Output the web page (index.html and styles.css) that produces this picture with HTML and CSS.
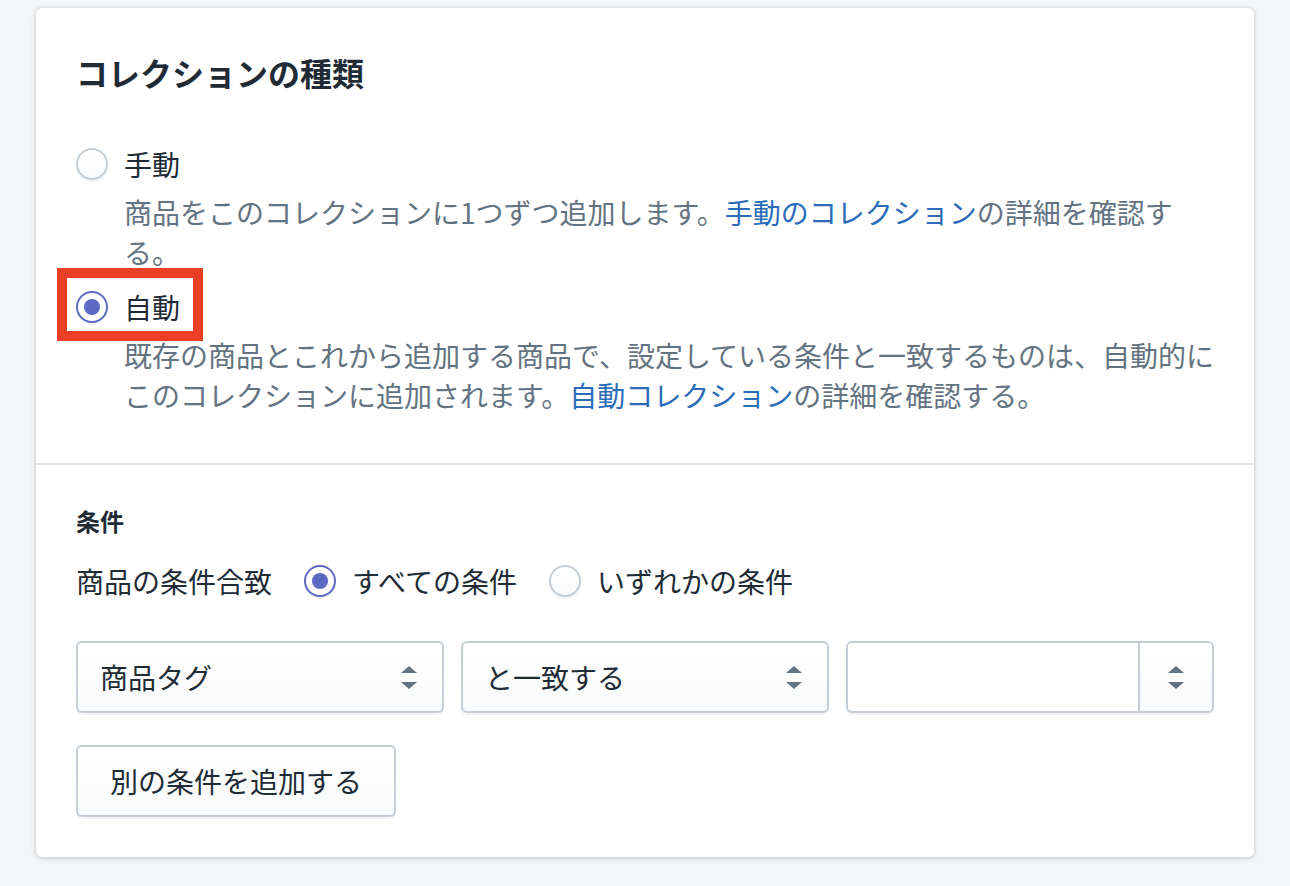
FILE: index.html
```html
<!DOCTYPE html>
<html lang="ja">
<head>
<meta charset="utf-8">
<title>コレクションの種類</title>
<link rel="stylesheet" href="styles.css">
</head>
<body>
<div class="card">
  <div class="card-header">
    <h2 class="card-title">コレクションの種類</h2>
  </div>
  <div class="section section-type">
    <ul class="choice-list">
      <li class="choice-item">
        <label class="choice">
          <span class="radio"></span>
          <span class="choice-label">手動</span>
        </label>
        <div class="help">商品をこのコレクションに1つずつ追加します。<a class="link" href="#">手動のコレクション</a>の詳細を確認する。</div>
      </li>
      <li class="choice-item">
        <label class="choice">
          <span class="radio checked"></span>
          <span class="choice-label">自動</span>
          <span class="highlight"></span>
        </label>
        <div class="help">既存の商品とこれから追加する商品で、設定している条件と一致するものは、自動的にこのコレクションに追加されます。<a class="link" href="#">自動コレクション</a>の詳細を確認する。</div>
      </li>
    </ul>
  </div>
  <div class="section section-conditions">
    <h3 class="subheading">条件</h3>
    <div class="match-row">
      <span class="match-label">商品の条件合致</span>
      <label class="choice inline">
        <span class="radio checked"></span>
        <span class="choice-label">すべての条件</span>
      </label>
      <label class="choice inline">
        <span class="radio"></span>
        <span class="choice-label">いずれかの条件</span>
      </label>
    </div>
    <div class="rule-row">
      <div class="select">
        <span class="select-text">商品タグ</span>
        <svg class="arrows" width="16" height="23" viewBox="0 0 16 23"><polygon points="0,7 8,0 16,7" /><polygon points="0,16 8,23 16,16" /></svg>
      </div>
      <div class="select">
        <span class="select-text">と一致する</span>
        <svg class="arrows" width="16" height="23" viewBox="0 0 16 23"><polygon points="0,7 8,0 16,7" /><polygon points="0,16 8,23 16,16" /></svg>
      </div>
      <div class="combo">
        <div class="combo-input"></div>
        <div class="combo-toggle">
          <svg class="arrows" width="16" height="23" viewBox="0 0 16 23"><polygon points="0,7 8,0 16,7" /><polygon points="0,16 8,23 16,16" /></svg>
        </div>
      </div>
    </div>
    <button class="button" type="button">別の条件を追加する</button>
  </div>
</div>
</body>
</html>
```
FILE: styles.css
```css
* { box-sizing: border-box; }

html, body {
  margin: 0;
  background: #f4f6f8;
}

body {
  padding: 8px 36px 28px;
  font-family: "Noto Sans CJK JP", "Noto Sans", sans-serif;
  color: #212b36;
  font-size: 28px;
  line-height: 40px;
}

.card {
  position: relative;
  background: #ffffff;
  border-radius: 6px;
  box-shadow: 0 0 0 2px rgba(63, 63, 68, 0.05), 0 2px 6px 0 rgba(63, 63, 68, 0.15);
}

.card-header {
  padding: 40px 40px 0;
}

.card-title {
  margin: 0;
  font-size: 32px;
  line-height: 48px;
  font-weight: 700;
  color: #212b36;
}

.section {
  padding: 40px;
}

.section-type {
  padding-bottom: 48px;
}

.section-conditions {
  border-top: 2px solid #dfe3e8;
}

.choice-list {
  list-style: none;
  margin: 0;
  padding: 0;
  display: flex;
  flex-direction: column;
  gap: 7px;
}

.choice {
  position: relative;
  display: flex;
  align-items: center;
  gap: 16px;
  padding: 8px 0;
  width: max-content;
}

.radio {
  flex: none;
  width: 32px;
  height: 32px;
  border-radius: 50%;
  border: 2px solid #c4cdd5;
  background: linear-gradient(180deg, #ffffff, #f9fafb);
  box-shadow: 0 2px 0 0 rgba(22, 29, 37, 0.05);
  display: flex;
  align-items: center;
  justify-content: center;
}

.radio.checked {
  border-color: #5c6ac4;
  background: #ffffff;
}

.radio.checked::after {
  content: "";
  width: 16px;
  height: 16px;
  border-radius: 50%;
  background: #5c6ac4;
}

.choice-label {
  color: #212b36;
}

.help {
  padding-left: 48px;
  margin-right: -6px;
  color: #637381;
}

.link {
  color: #2a6cb8;
  text-decoration: none;
}

.highlight {
  position: absolute;
  left: -19px;
  top: -11px;
  width: 146px;
  height: 73px;
  border: 10px solid #ea3f24;
  pointer-events: none;
}

.subheading {
  margin: 0;
  font-size: 24px;
  line-height: 32px;
  font-weight: 700;
  color: #212b36;
}

.match-row {
  display: flex;
  align-items: center;
  margin-top: 16px;
}

.match-label {
  margin-right: 32px;
}

.choice.inline {
  margin-right: 32px;
}

.rule-row {
  display: grid;
  grid-template-columns: repeat(3, 1fr);
  gap: 17px;
  margin-top: 32px;
}

.select, .combo {
  height: 72px;
  border: 2px solid #c4cdd5;
  border-radius: 6px;
  box-shadow: 0 2px 0 0 rgba(22, 29, 37, 0.05);
}

.select {
  display: flex;
  align-items: center;
  justify-content: space-between;
  padding: 0 25px 0 22px;
  background: linear-gradient(180deg, #ffffff, #f9fafb);
}

.arrows {
  display: block;
  fill: #637381;
}

.combo {
  display: flex;
  background: #ffffff;
  overflow: hidden;
}

.combo-input {
  flex: 1;
}

.combo-toggle {
  flex: none;
  width: 74px;
  border-left: 2px solid #c4cdd5;
  background: linear-gradient(180deg, #ffffff, #f9fafb);
  display: flex;
  align-items: center;
  justify-content: center;
}

.button {
  display: inline-flex;
  align-items: center;
  height: 72px;
  margin-top: 32px;
  padding: 0 32px;
  border: 2px solid #c4cdd5;
  border-radius: 6px;
  background: linear-gradient(180deg, #ffffff, #f9fafb);
  box-shadow: 0 2px 0 0 rgba(22, 29, 37, 0.05);
  font-family: inherit;
  font-size: 28px;
  color: #212b36;
}
```
